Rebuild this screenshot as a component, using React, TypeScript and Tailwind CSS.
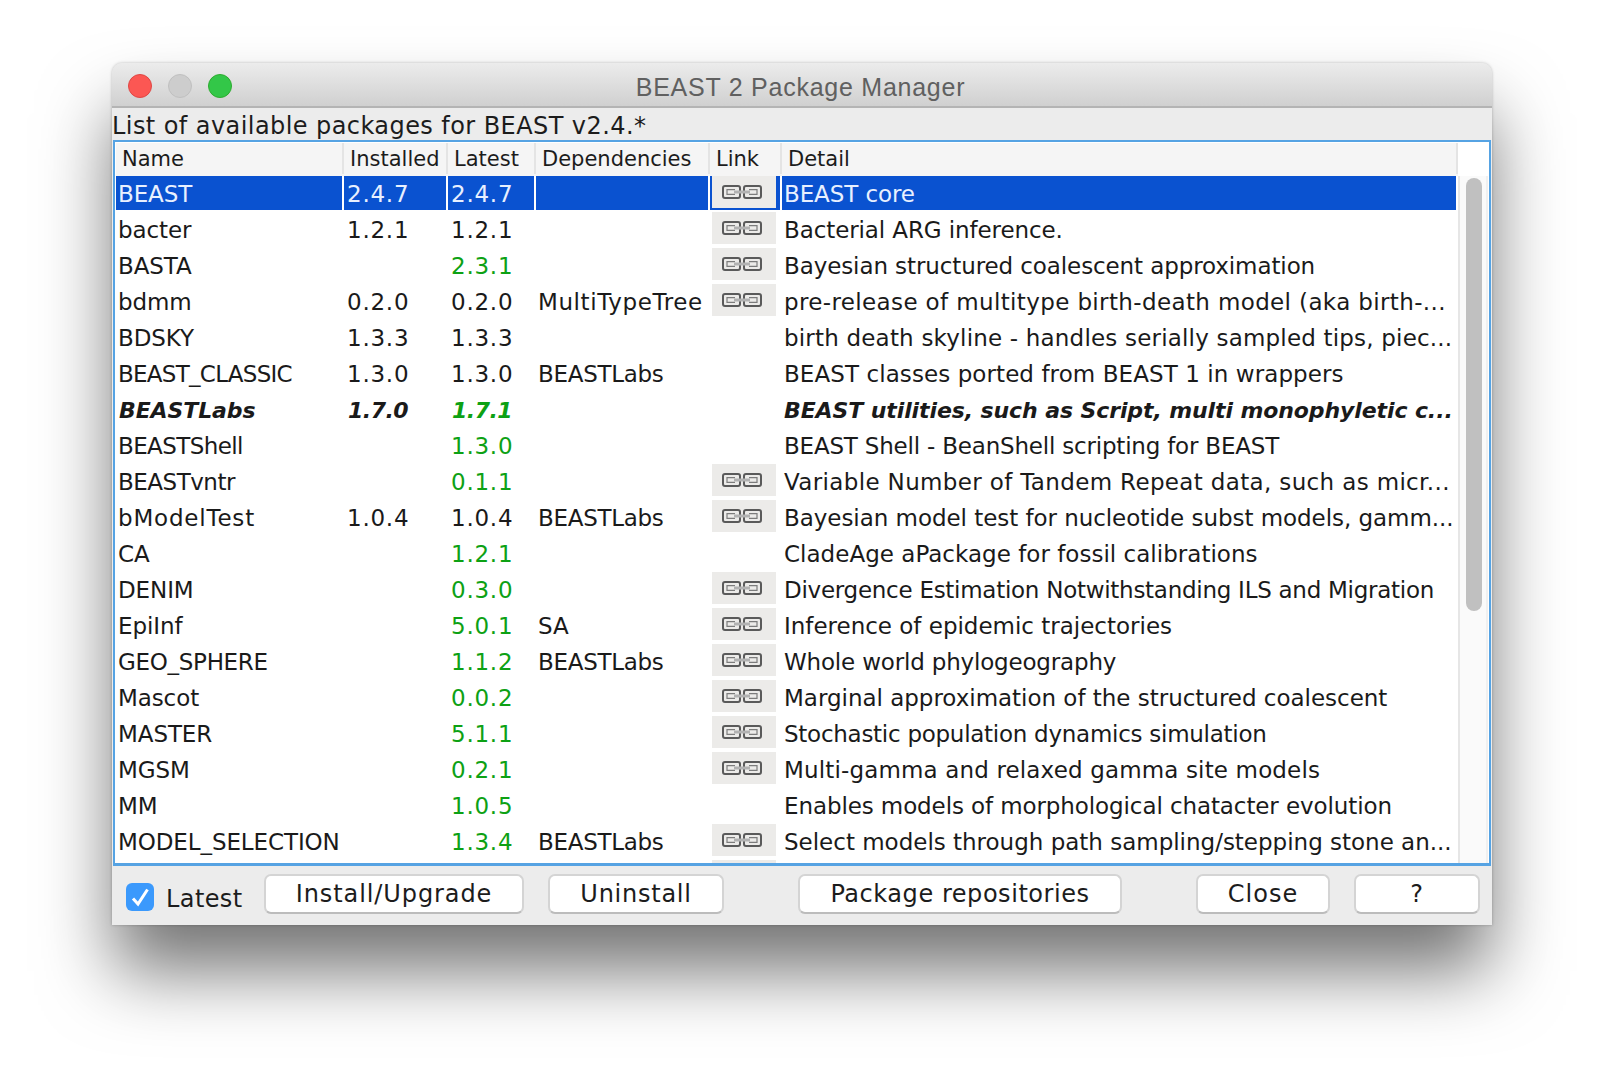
const rows: [string, string, string, boolean, string, boolean, string, boolean?][] = [
  ["BEAST", "2.4.7", "2.4.7", false, "", true, "BEAST core"],
  ["bacter", "1.2.1", "1.2.1", false, "", true, "Bacterial ARG inference."],
  ["BASTA", "", "2.3.1", true, "", true, "Bayesian structured coalescent approximation"],
  ["bdmm", "0.2.0", "0.2.0", false, "MultiTypeTree", true, "pre-release of multitype birth-death model (aka birth-..."],
  ["BDSKY", "1.3.3", "1.3.3", false, "", false, "birth death skyline - handles serially sampled tips, piec..."],
  ["BEAST_CLASSIC", "1.3.0", "1.3.0", false, "BEASTLabs", false, "BEAST classes ported from BEAST 1 in wrappers"],
  ["BEASTLabs", "1.7.0", "1.7.1", true, "", false, "BEAST utilities, such as Script, multi monophyletic c...", true],
  ["BEASTShell", "", "1.3.0", true, "", false, "BEAST Shell - BeanShell scripting for BEAST"],
  ["BEASTvntr", "", "0.1.1", true, "", true, "Variable Number of Tandem Repeat data, such as micr..."],
  ["bModelTest", "1.0.4", "1.0.4", false, "BEASTLabs", true, "Bayesian model test for nucleotide subst models, gamm..."],
  ["CA", "", "1.2.1", true, "", false, "CladeAge aPackage for fossil calibrations"],
  ["DENIM", "", "0.3.0", true, "", true, "Divergence Estimation Notwithstanding ILS and Migration"],
  ["EpiInf", "", "5.0.1", true, "SA", true, "Inference of epidemic trajectories"],
  ["GEO_SPHERE", "", "1.1.2", true, "BEASTLabs", true, "Whole world phylogeography"],
  ["Mascot", "", "0.0.2", true, "", true, "Marginal approximation of the structured coalescent"],
  ["MASTER", "", "5.1.1", true, "", true, "Stochastic population dynamics simulation"],
  ["MGSM", "", "0.2.1", true, "", true, "Multi-gamma and relaxed gamma site models"],
  ["MM", "", "1.0.5", true, "", false, "Enables models of morphological chatacter evolution"],
  ["MODEL_SELECTION", "", "1.3.4", true, "BEASTLabs", true, "Select models through path sampling/stepping stone an..."],
  ["", "", "", true, "", true, ""],
];

const detailTrack: Record<string, string> = {
  bdmm: "tracking-[0.37px]",
  BDSKY: "tracking-[0.19px]",
  BEAST_CLASSIC: "tracking-[0.08px]",
  BEASTShell: "tracking-[-0.2px]",
  BEASTvntr: "tracking-[0.35px]",
  bModelTest: "tracking-[-0.05px]",
  CA: "tracking-[0.02px]",
  DENIM: "tracking-[-0.27px]",
  EpiInf: "tracking-[-0.01px]",
  GEO_SPHERE: "tracking-[-0.18px]",
  Mascot: "tracking-[-0.02px]",
  MASTER: "tracking-[-0.27px]",
  MGSM: "tracking-[0.15px]",
  MODEL_SELECTION: "tracking-[-0.01px]",
};

const nameTrack: Record<string, string> = {
  BEAST_CLASSIC: "tracking-[-0.73px]",
  bModelTest: "tracking-[0.8px]",
  BEASTvntr: "tracking-[-0.5px]",
  BEASTShell: "tracking-[-0.6px]",
  GEO_SPHERE: "tracking-[-0.3px]",
};

const COLS = "grid grid-cols-[226px_102px_86px_172px_70px_674px] gap-x-[2px]";

function LinkIcon() {
  return (
    <svg width="40" height="14" viewBox="0 0 40 14" fill="none">
      <rect x="1" y="1" width="17" height="12" rx="2" stroke="#5a5a5a" strokeWidth="2" />
      <rect x="22" y="1" width="17" height="12" rx="2" stroke="#5a5a5a" strokeWidth="2" />
      <path d="M13 4.6H5V9.4H13M27 4.6H35V9.4H27" stroke="#7c7c7c" strokeWidth="1.2" />
      <path d="M12 7H28" stroke="#b2b2b2" strokeWidth="3" />
    </svg>
  );
}

function Header({ label, w }: { label: string; w: string }) {
  return (
    <div className={`${w} h-[31px] flex items-center pt-[2px] text-[#1c1c1c] text-[21px] border-r-2 border-[#e4e4e4]`}>
      {label}
    </div>
  );
}

function Btn({ label, w, ml, track }: { label: string; w: string; ml: string; track: string }) {
  return (
    <button className={`${w} ${ml} ${track} h-[40px] rounded-[7px] bg-white border-2 border-[#d4d4d4] border-b-[#bcbcbc] text-[#1c1c1c] text-[24px] flex items-center justify-center pb-[1px]`}>
      {label}
    </button>
  );
}

export default function App() {
  return (
    <div className="w-[1604px] h-[1084px] bg-white pl-[112px] pt-[63px] overflow-hidden font-['DejaVu_Sans',sans-serif]">
      <div className="w-[1380px] h-[862px] bg-[#ececec] rounded-t-[10px] flex flex-col shadow-[0_48px_72px_-2px_rgba(0,0,0,0.55),0_0_3px_rgba(0,0,0,0.25)]">
        {/* Title bar */}
        <div className="relative h-[45px] shrink-0 rounded-t-[10px] bg-gradient-to-b from-[#ececec] to-[#d0d0d0] border-b-2 border-[#b4b4b4] flex items-center justify-center">
          <div className="absolute left-[16px] top-[11px] flex gap-[16px]">
            <div className="w-[24px] h-[24px] rounded-full bg-[#fc5753] border border-[#df4744]" />
            <div className="w-[24px] h-[24px] rounded-full bg-[#cdcdcd] border border-[#c0c0c0]" />
            <div className="w-[24px] h-[24px] rounded-full bg-[#33c748] border border-[#2dac2f]" />
          </div>
          <span className="font-['Liberation_Sans',sans-serif] text-[25px] tracking-[0.75px] text-[#606060] mr-[3px] pt-[6px]">BEAST 2 Package Manager</span>
        </div>
        {/* Caption */}
        <div className="h-[32px] shrink-0 pt-[3px] text-[24px] tracking-[0.43px] text-[#1c1c1c] flex items-center">
          List of available packages for BEAST v2.4.*
        </div>
        {/* Table */}
        <div className="h-[726px] shrink-0 ml-[1px] mr-[1px] border-2 border-b-[3px] border-[#56a3e3] bg-white flex overflow-hidden pl-[1px] pt-[1px]">
          <div className="w-[1342px] shrink-0 flex flex-col">
            <div className="flex h-[33px] shrink-0 bg-[#f5f5f5] pl-[6px] items-start">
              <Header label="Name" w="w-[222px]" />
              <Header label="Installed" w="w-[104px] pl-[6px]" />
              <Header label="Latest" w="w-[88px] pl-[6px]" />
              <Header label="Dependencies" w="w-[174px] pl-[6px]" />
              <Header label="Link" w="w-[72px] pl-[6px]" />
              <Header label="Detail" w="w-[676px] pl-[6px]" />
            </div>
            {rows.map((r, i) => {
              const sel = i === 0;
              const bold = !!r[7];
              const bg = sel ? "bg-[#0a52d0]" : "";
              const fg = sel ? "text-[#e8f0ff]" : "text-[#1a1a1a]";
              const boldCls = bold ? "font-bold italic text-[22px]" : "";
              const cell = `h-[34px] leading-[36px] overflow-visible ${bold ? "pt-[1px]" : ""}`;
              const latestFg = sel ? "text-[#e8f0ff]" : r[3] ? "text-[#0da114]" : "text-[#1a1a1a]";
              const verTrack = bold ? "tracking-[-0.5px] pl-[4px]" : "tracking-[0.75px] pl-[3px]";
              const depTrack = r[4] === "MultiTypeTree" ? "tracking-[0.6px]" : r[4] === "BEASTLabs" ? "tracking-[-0.3px]" : "";
              return (
                <div key={i} className={`${COLS} h-[36px] shrink-0 pb-[2px] text-[23px] tracking-[-0.1px] whitespace-nowrap`}>
                  <div className={`${cell} ${bg} ${fg} ${boldCls} ${bold ? "pl-[3px]" : "pl-[2px]"} ${nameTrack[r[0]] ?? ""}`}>{r[0]}</div>
                  <div className={`${cell} ${bg} ${fg} ${boldCls} ${verTrack}`}>{r[1]}</div>
                  <div className={`${cell} ${bg} ${latestFg} ${boldCls} ${verTrack}`}>{r[2]}</div>
                  <div className={`${cell} ${bg} ${fg} pl-[2px] ${depTrack}`}>{r[4]}</div>
                  <div className={sel ? "h-[34px] bg-[#ecebe9] border-l-2 border-r-4 border-b-2 border-[#0a52d0] flex items-center pl-[10px]" : "pl-[2px] pr-[4px]"}>
                    {sel ? (
                      <LinkIcon />
                    ) : r[5] ? (
                      <div className="h-[32px] bg-[#ecebe9] flex items-center pl-[10px]">
                        <LinkIcon />
                      </div>
                    ) : null}
                  </div>
                  <div className={`${cell} ${bg} ${fg} ${boldCls} pl-[2px] ${detailTrack[r[0]] ?? ""}`}>{r[6]}</div>
                </div>
              );
            })}
          </div>
          {/* Scrollbar */}
          <div className="flex-1 pt-[33px]">
            <div className="w-[30px] h-full bg-[#fafafa] border-l-2 border-l-[#e6e6e6] border-r-2 border-r-[#f0f0f0] pl-[6px] pt-[2px]">
              <div className="w-[16px] h-[433px] rounded-full bg-[#c0c0c0]" />
            </div>
          </div>
        </div>
        {/* Bottom bar */}
        <div className="flex-1 flex items-start pt-[8px]">
          <div className="ml-[14px] mt-[9px] w-[28px] h-[28px] rounded-[6px] bg-[#3b99fc] shrink-0">
            <svg width="28" height="28" viewBox="0 0 28 28" fill="none">
              <path d="M7 15.5l5 5.5L21.5 6.5" stroke="white" strokeWidth="3" />
            </svg>
          </div>
          <span className="ml-[12px] mt-[7px] w-[98px] text-[24px] tracking-[0.4px] text-[#1c1c1c] shrink-0">Latest</span>
          <Btn label="Install/Upgrade" w="w-[260px]" ml="" track="tracking-[0.9px]" />
          <Btn label="Uninstall" w="w-[176px]" ml="ml-[24px]" track="tracking-[0.75px]" />
          <Btn label="Package repositories" w="w-[324px]" ml="ml-[74px]" track="tracking-[0.55px]" />
          <Btn label="Close" w="w-[134px]" ml="ml-[74px]" track="tracking-[1px]" />
          <Btn label="?" w="w-[126px]" ml="ml-[24px]" track="tracking-[1px]" />
        </div>
      </div>
    </div>
  );
}
